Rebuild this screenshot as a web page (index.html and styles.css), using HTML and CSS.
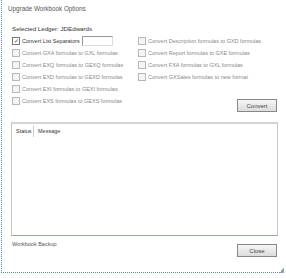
FILE: index.html
```html
<!DOCTYPE html>
<html lang="en">
<head>
    <meta charset="UTF-8">
    <title>Upgrade Workbook Options</title>
    <link rel="stylesheet" href="styles.css">
</head>
<body>
    <div class="dialog">
        <div class="dialog-title">Upgrade Workbook Options</div>

        <div class="ledger">Selected Ledger: JDEdwards</div>

        <div class="options">
            <div class="option-col left">
                <div class="option active">
                    <span class="check checked">&#10003;</span>
                    <span>Convert List Separators</span>
                    <input type="text" class="sep-input" value="">
                </div>
                <div class="option"><span class="check"></span><span>Convert GXA formulas to GXL formulas</span></div>
                <div class="option"><span class="check"></span><span>Convert EXQ formulas to GEXQ formulas</span></div>
                <div class="option"><span class="check"></span><span>Convert EXD formulas to GEXD formulas</span></div>
                <div class="option"><span class="check"></span><span>Convert EXI formulas to GEXI formulas</span></div>
                <div class="option"><span class="check"></span><span>Convert EXS formulas to GEXS formulas</span></div>
            </div>
            <div class="option-col right">
                <div class="option"><span class="check"></span><span>Convert Description formulas to GXD formulas</span></div>
                <div class="option"><span class="check"></span><span>Convert Report formulas to GXE formulas</span></div>
                <div class="option"><span class="check"></span><span>Convert FXA formulas to GXL formulas</span></div>
                <div class="option"><span class="check"></span><span>Convert GXSales formulas to new format</span></div>
            </div>
        </div>

        <div class="button-row">
            <button class="btn">Convert</button>
        </div>

        <div class="log-box">
            <div class="log-head">
                <span class="col-status">Status</span>
                <span class="col-message">Message</span>
            </div>
        </div>

        <div class="footer">
            <span class="backup">Workbook Backup</span>
            <button class="btn close-btn">Close</button>
        </div>
    </div>
    <div class="grip"></div>
</body>
</html>
```

FILE: styles.css
```css
body {
    margin: 0;
    background: #fff;
    font-family: "Liberation Sans", Arial, sans-serif;
    font-size: 5.5px;
    color: #444;
}

.dialog {
    margin-left: 1px;
    width: 283px;
    height: 273px;
    border-left: 1px dotted #5b86d6;
    border-bottom: 1px dotted #5b86d6;
    box-sizing: border-box;
    padding: 4px 7px 0 6px;
}

.dialog-title {
    height: 10px;
    line-height: 10px;
    color: #555;
    font-size: 6.3px;
}

.ledger {
    margin: 10px 0 0 4px;
    height: 10px;
    line-height: 10px;
    color: #333;
    font-size: 6.2px;
}

.options {
    display: flex;
    margin: 1px 0 0 4px;
}

.option-col {
    display: flex;
    flex-direction: column;
}

.option-col.left {
    width: 126px;
}

.option {
    display: flex;
    align-items: center;
    height: 12px;
    color: #8a8a8a;
    white-space: nowrap;
}

.option.active {
    color: #333;
}

.check {
    width: 6px;
    height: 6px;
    border: 1px solid #b8b8b8;
    background: #f4f4f4;
    margin-right: 2px;
    font-size: 6px;
    line-height: 6px;
    text-align: center;
    color: #333;
    flex: none;
}

.check.checked {
    border-color: #777;
    background: #fff;
}

.sep-input {
    width: 31px;
    height: 10px;
    box-sizing: border-box;
    margin: 0 0 0 2px;
    padding: 0;
    border: 1px solid #999;
    border-right-color: #ddd;
    border-bottom-color: #ddd;
}

.button-row {
    display: flex;
    justify-content: flex-end;
    margin-top: -8px;
}

.btn {
    width: 40px;
    height: 13px;
    padding: 0;
    font-family: inherit;
    font-size: 6px;
    color: #444;
    border: 1px solid #888;
    background: linear-gradient(#f6f6f6, #dcdcdc);
}

.log-box {
    margin: 10px -1px 0 3px;
    height: 111px;
    border: 1px solid #c8c8c8;
    border-bottom-color: #9aa89a;
    border-top: 2px solid #d4d4d4;
}

.log-head {
    display: flex;
    height: 11px;
    line-height: 11px;
    padding: 2px 0 0 4px;
    color: #333;
}

.col-status {
    width: 17px;
    border-right: 1px solid #ccc;
    margin-right: 4px;
}

.footer {
    display: flex;
    justify-content: space-between;
    align-items: flex-start;
    margin: 3px 0 0 4px;
}

.backup {
    line-height: 10px;
    color: #555;
}

.close-btn {
    margin-top: 5px;
}

.grip {
    position: absolute;
    right: 2px;
    top: 268px;
    width: 5px;
    height: 5px;
    background: linear-gradient(135deg, transparent 50%, #8aa 50%);
}
```
